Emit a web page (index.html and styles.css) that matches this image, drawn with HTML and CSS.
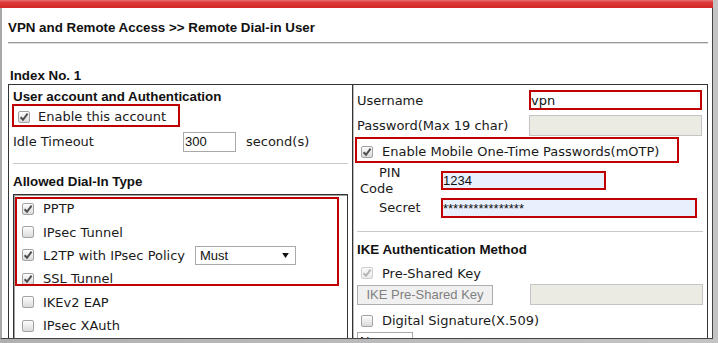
FILE: index.html
```html
<!DOCTYPE html>
<html lang="en">
<head>
    <meta charset="UTF-8">
    <title>Remote Dial-in User</title>
    <link rel="stylesheet" href="styles.css">
</head>
<body>
<div class="screen">
    <div class="topbar"></div>
    <div class="window">
        <div class="page">
            <h1 class="title">VPN and Remote Access &gt;&gt; Remote Dial-in User</h1>
            <div class="index">Index No. 1</div>

            <div class="panel">
                <!-- left column -->
                <div class="col col-left">
                    <div class="sec sec-first">User account and Authentication</div>
                    <label class="check-row boxed enable-box">
                        <span class="cb on"><svg viewBox="0 0 10 10"><path d="M1.6 5.2 L4 7.8 L8.6 1.6"/></svg></span>
                        <span>Enable this account</span>
                    </label>
                    <div class="field idle">
                        <span class="idle-label">Idle Timeout</span>
                        <input class="txt idle-input" type="text" value="300">
                        <span class="unit">second(s)</span>
                    </div>
                    <div class="rule"></div>
                    <div class="sec sec-mid">Allowed Dial-In Type</div>
                    <div class="types">
                        <div class="opt"><span class="cb on"><svg viewBox="0 0 10 10"><path d="M1.6 5.2 L4 7.8 L8.6 1.6"/></svg></span><span>PPTP</span></div>
                        <div class="opt"><span class="cb"></span><span>IPsec Tunnel</span></div>
                        <div class="opt">
                            <span class="cb on"><svg viewBox="0 0 10 10"><path d="M1.6 5.2 L4 7.8 L8.6 1.6"/></svg></span>
                            <span>L2TP with IPsec Policy</span>
                            <span class="select must"><span>Must</span><svg class="arrow" viewBox="0 0 8 6"><polygon points="0,0 8,0 4,6"/></svg></span>
                        </div>
                        <div class="opt"><span class="cb on"><svg viewBox="0 0 10 10"><path d="M1.6 5.2 L4 7.8 L8.6 1.6"/></svg></span><span>SSL Tunnel</span></div>
                        <div class="opt"><span class="cb"></span><span>IKEv2 EAP</span></div>
                        <div class="opt"><span class="cb"></span><span>IPsec XAuth</span></div>
                        <div class="hl"></div>
                    </div>
                </div>

                <!-- right column -->
                <div class="col col-right">
                    <div class="pair user-row">
                        <span>Username</span>
                        <input class="txt marked user-input" type="text" value="vpn">
                    </div>
                    <div class="pair pass-row">
                        <span>Password(Max 19 char)</span>
                        <input class="txt dis" type="text" disabled>
                    </div>
                    <label class="check-row boxed motp-box">
                        <span class="cb on"><svg viewBox="0 0 10 10"><path d="M1.6 5.2 L4 7.8 L8.6 1.6"/></svg></span>
                        <span>Enable Mobile One-Time Passwords(mOTP)</span>
                    </label>
                    <div class="otp pin-row">
                        <span class="otp-label">PIN Code</span>
                        <input class="txt marked auto pin-input" type="text" value="1234">
                    </div>
                    <div class="otp secret-row">
                        <span class="otp-label">Secret</span>
                        <input class="txt marked auto secret-input" type="text" value="****************">
                    </div>
                    <div class="rule rule-right"></div>
                    <div class="sec sec-mid">IKE Authentication Method</div>
                    <div class="check-row psk-row">
                        <span class="cb on faded"><svg viewBox="0 0 10 10"><path d="M1.6 5.2 L4 7.8 L8.6 1.6"/></svg></span>
                        <span>Pre-Shared Key</span>
                    </div>
                    <div class="btn-row">
                        <button class="btn" type="button" disabled>IKE Pre-Shared Key</button>
                        <input class="txt dis key-input" type="text" disabled>
                    </div>
                    <div class="check-row sig-row">
                        <span class="cb"></span>
                        <span>Digital Signature(X.509)</span>
                    </div>
                    <span class="select none"><span>None</span><svg class="arrow" viewBox="0 0 8 6"><polygon points="0,0 8,0 4,6"/></svg></span>
                </div>
            </div>
        </div>
    </div>
</div>
</body>
</html>
```

FILE: styles.css
```css
* {
    box-sizing: border-box;
}
body {
    margin: 0;
    background: #fff;
    font-family: Verdana, "DejaVu Sans", sans-serif;
    font-size: 13px;
    color: #1a1a1a;
}
.screen {
    width: 718px;
    height: 343px;
    overflow: hidden;
    background: linear-gradient(90deg, #b0b0b0, #c4c4c4);
}
.topbar {
    width: 713px;
    height: 8px;
    background: linear-gradient(#ea7070 0, #dd3a3a 30%, #d22626 100%);
}
.window {
    width: 713px;
    height: 331px;
    overflow: hidden;
    background: #fff;
    border-left: 2px solid #a8a8a8;
    border-right: 1px solid #444;
    border-bottom: 1px solid #444;
}
.page {
    padding: 0 4px 0 6px;
}
.title,
.index,
.sec {
    font-family: Arial, "Liberation Sans", sans-serif;
    font-weight: bold;
    font-size: 13.33px;
    color: #111;
}
.title {
    margin: 0;
    height: 35px;
    line-height: 40px;
    border-bottom: 1px solid #999;
    box-shadow: 0 1px 0 #dcdcdc;
}
.index {
    height: 41px;
    padding: 25px 0 0 2px;
    line-height: 16px;
}
.panel {
    display: grid;
    grid-template-columns: 344px 1fr;
    height: 262px;
    border: 1px solid #333;
}
.col {
    padding: 0 4px;
}
.col-left {
    border-right: 1px solid #333;
}
.col-right {
    box-shadow: inset 1px 0 0 #bdbdbd;
}

/* headings inside the panel */
.sec-first {
    height: 19px;
    line-height: 24px;
}
.sec-mid {
    height: 30px;
    line-height: 36px;
}

/* checkboxes */
.cb {
    flex: none;
    display: inline-flex;
    align-items: center;
    justify-content: center;
    width: 12px;
    height: 12px;
    border: 1px solid #a3a3a3;
    border-radius: 2px;
    background: linear-gradient(#fdfdfd, #dadada);
}
.cb svg {
    width: 10px;
    height: 10px;
}
.cb path {
    fill: none;
    stroke: #4f4f4f;
    stroke-width: 2;
}
.cb.faded {
    border-color: #cfcfcf;
    background: linear-gradient(#fafafa, #ececec);
}
.cb.faded path {
    stroke: #b4b4b4;
}

.check-row {
    display: flex;
    align-items: center;
    gap: 9px;
}
.boxed {
    border: 2px solid #c00000;
}
.enable-box {
    width: 168px;
    height: 23px;
    margin-left: -1px;
    padding: 2px 0 0 4px;
    gap: 8px;
}
.motp-box {
    width: 324px;
    height: 26px;
    margin: 1px 0 0 -2px;
    padding: 3px 0 0 4px;
}

/* text inputs */
.txt {
    height: 20px;
    margin: 0;
    padding: 0 1px;
    border: 1px solid #a9a9a9;
    border-radius: 0;
    background: #fff;
    font-family: Arial, "Liberation Sans", sans-serif;
    font-size: 13px;
    color: #111;
    outline: none;
}
.txt.dis {
    background: #ebebe4;
    border-color: #c4c4c4;
}
.txt.marked {
    border: 2px solid #c00000;
    padding: 0;
}
.txt.auto {
    background: #e8f0fe;
}

.field {
    display: flex;
    align-items: center;
    height: 29px;
}
.idle-label {
    width: 170px;
}
.idle-input {
    width: 53px;
}
.unit {
    margin-left: 10px;
}
.rule {
    margin-top: 7px;
    border-top: 1px solid #c8c8c8;
}

/* allowed dial-in types */
.types {
    position: relative;
    height: 150px;
    padding-top: 2px;
    border: 1px solid #333;
    box-shadow: inset 1px 1px 0 #a0a0a0;
}
.opt {
    display: flex;
    align-items: center;
    gap: 9px;
    height: 23.4px;
    padding-left: 8px;
}
.hl {
    position: absolute;
    left: 1px;
    top: 2px;
    width: 324px;
    height: 89px;
    border: 2px solid #c00000;
}

.select {
    display: inline-flex;
    align-items: center;
    justify-content: space-between;
    height: 19px;
    border: 1px solid #a9a9a9;
    background: #fff;
    font-family: Arial, "Liberation Sans", sans-serif;
    font-size: 13px;
    color: #111;
}
.select .arrow {
    width: 7px;
    height: 5px;
    fill: #111;
}
.must {
    width: 101px;
    margin-left: 1px;
    padding: 0 6px 0 4px;
}
.none {
    width: 56px;
    padding: 0 5px 0 2px;
}

/* right column rows */
.pair {
    display: grid;
    grid-template-columns: 172px 173px;
    align-items: center;
}
.user-row {
    height: 30px;
}
.user-input {
    height: 20px;
    font-family: Verdana, "DejaVu Sans", sans-serif;
}
.pass-row {
    height: 21px;
}
.pass-row .txt {
    height: 21px;
}

.otp {
    display: grid;
    grid-template-columns: 81px 1fr;
    margin-left: 3px;
}
.otp-label {
    width: 70px;
    text-indent: 19px;
    line-height: 16px;
}
.pin-row {
    height: 33px;
    align-items: start;
}
.pin-row .otp-label {
    padding-top: 2px;
}
.pin-input {
    width: 165px;
    height: 19px;
    margin-top: 8px;
}
.secret-row {
    height: 24px;
    align-items: center;
}
.secret-input {
    width: 256px;
    height: 20px;
}
.rule-right {
    margin-top: 11px;
}
.psk-row {
    height: 22px;
    padding-left: 4px;
}
.btn-row {
    display: flex;
    align-items: center;
    height: 21px;
}
.btn {
    width: 136px;
    height: 20px;
    padding: 0;
    border: 1px solid #adadad;
    border-radius: 0;
    background: #f0f0f0;
    font-family: Arial, "Liberation Sans", sans-serif;
    font-size: 13px;
    color: #808080;
}
.key-input {
    width: 173px;
    height: 21px;
    margin-left: auto;
}
.sig-row {
    height: 27px;
    padding: 4px 0 0 4px;
}
```
